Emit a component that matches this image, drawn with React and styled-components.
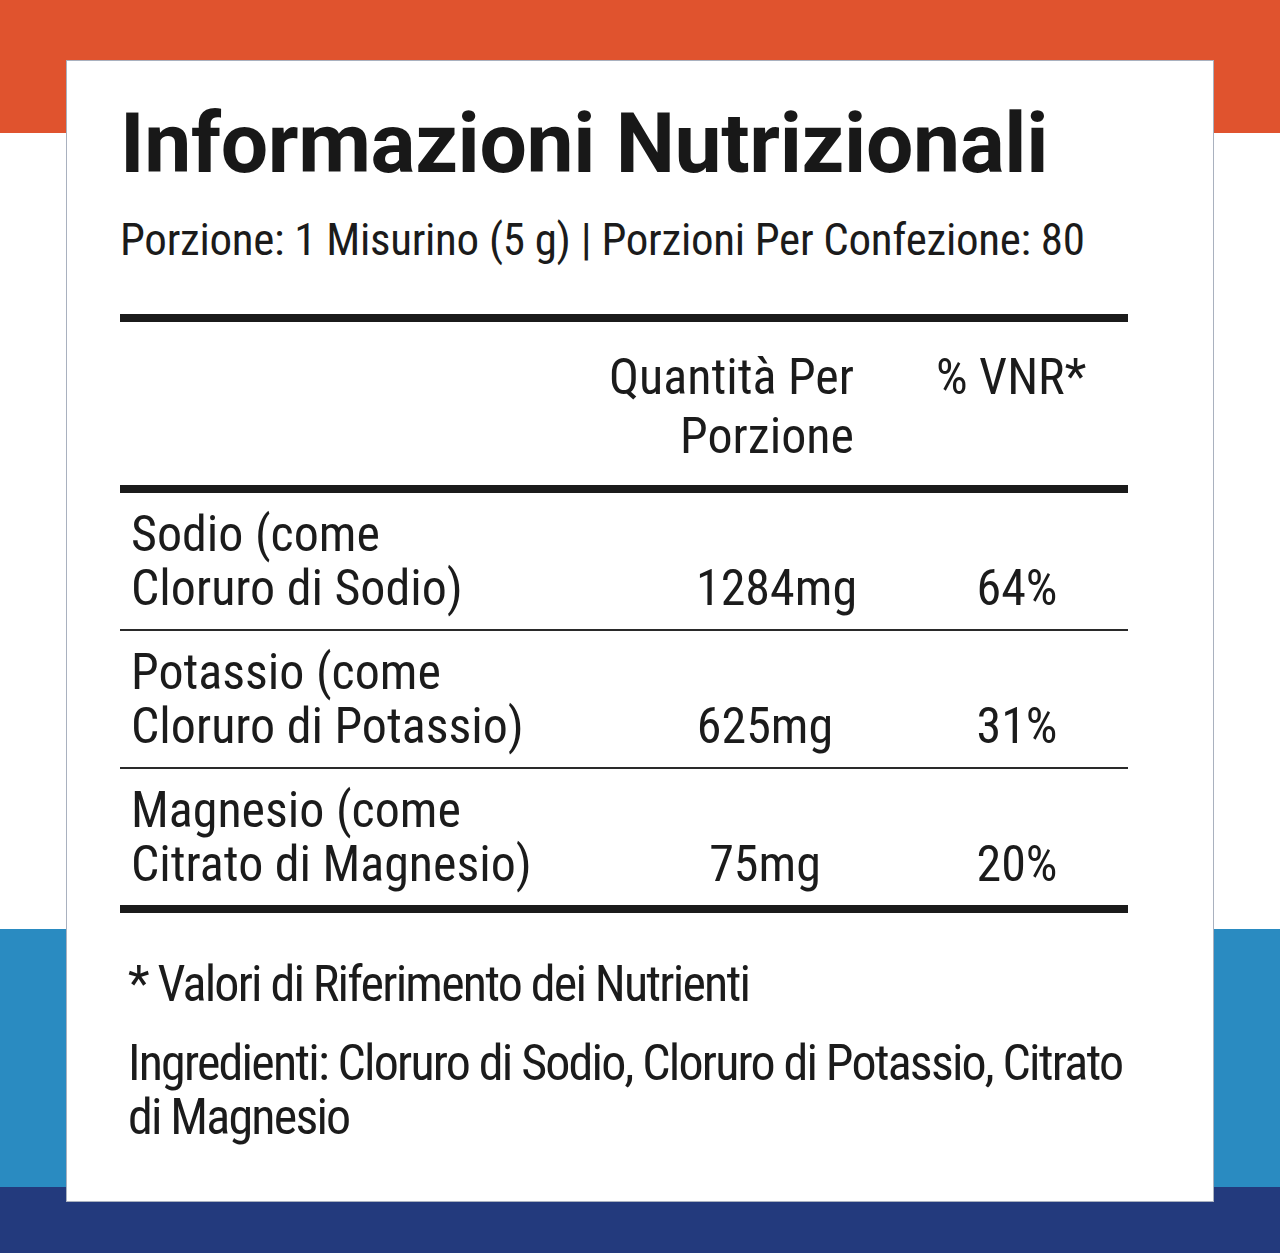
import React from 'react';
import styled, { createGlobalStyle } from 'styled-components';

const GlobalStyle = createGlobalStyle`
  html, body {
    margin: 0;
    padding: 0;
  }
  body {
    font-family: "Roboto Condensed", "DejaVu Sans Condensed", Roboto, sans-serif;
    color: #1b1b1b;
  }
`;

const rows = [
  { name: ['Sodio (come', 'Cloruro di Sodio)'], qty: '1284mg', pct: '64%', shift: 20 },
  { name: ['Potassio (come', 'Cloruro di Potassio)'], qty: '625mg', pct: '31%', shift: 0 },
  { name: ['Magnesio (come', 'Citrato di Magnesio)'], qty: '75mg', pct: '20%', shift: 0 },
];

const App = () => {
  return (
    <Page>
      <GlobalStyle />
      <Card>
        <Title>Informazioni Nutrizionali</Title>
        <Serving>Porzione: 1 Misurino (5 g) | Porzioni Per Confezione: 80</Serving>

        <Table>
          <HeadRow>
            <Cell />
            <QtyHead>
              Quantità Per
              <br />
              Porzione
            </QtyHead>
            <PctHead>% VNR*</PctHead>
          </HeadRow>
          {rows.map((r, i) => (
            <Row key={r.qty} last={i === rows.length - 1}>
              <Name>
                {r.name[0]}
                <br />
                {r.name[1]}
              </Name>
              <Qty shift={r.shift}>{r.qty}</Qty>
              <Pct>{r.pct}</Pct>
            </Row>
          ))}
        </Table>

        <Footer>
          <Note>* Valori di Riferimento dei Nutrienti</Note>
          <Note>
            Ingredienti: Cloruro di Sodio, Cloruro di Potassio, Citrato di Magnesio
          </Note>
        </Footer>
      </Card>
    </Page>
  );
};

const Page = styled.div`
  width: 1280px;
  height: 1253px;
  padding: 60px 66px 0;
  box-sizing: border-box;
  background: linear-gradient(
    to bottom,
    #e0532e 0,
    #e0532e 133px,
    #ffffff 133px,
    #ffffff 929px,
    #2a8bc1 929px,
    #2a8bc1 1187px,
    #233a7d 1187px,
    #233a7d 100%
  );
`;

const Card = styled.div`
  width: 1148px;
  height: 1142px;
  box-sizing: border-box;
  background: #ffffff;
  border: 1px solid #a9b1bf;
  padding: 41px 85px 0 53px;
`;

const Title = styled.h1`
  margin: 0;
  font-family: Roboto, "Liberation Sans", sans-serif;
  font-weight: 700;
  font-size: 84px;
  line-height: 84px;
  letter-spacing: -0.35px;
  color: #181818;
`;

const Serving = styled.div`
  margin-top: 27px;
  font-size: 45px;
  line-height: 54px;
  letter-spacing: -0.3px;
  white-space: nowrap;
`;

const Table = styled.div`
  margin-top: 47px;
  border-top: 8px solid #1b1b1b;
  border-bottom: 8px solid #1b1b1b;
`;

const HeadRow = styled.div`
  display: grid;
  grid-template-columns: 1fr 250px 274px;
  padding: 26px 0 19px;
  border-bottom: 8px solid #1b1b1b;
  font-size: 50px;
  line-height: 59px;
`;

const Cell = styled.div``;

const QtyHead = styled.div`
  text-align: right;
  white-space: nowrap;
`;

const PctHead = styled.div`
  padding-left: 82px;
  white-space: nowrap;
`;

const Row = styled.div`
  display: grid;
  grid-template-columns: 1fr 250px 274px;
  align-items: end;
  padding: 14px 0;
  font-size: 50px;
  line-height: 54px;
  border-bottom: ${(p) => (p.last ? 'none' : '2px solid #2a2a2a')};
`;

const Name = styled.div`
  padding-left: 11px;
  white-space: nowrap;
`;

const Qty = styled.div`
  padding-left: ${(p) => 72 + p.shift}px;
  text-align: center;
  white-space: nowrap;
`;

const Pct = styled.div`
  padding-left: 52px;
  text-align: center;
`;

const Footer = styled.div`
  margin-top: 44px;
  padding-left: 8px;
  display: flex;
  flex-direction: column;
  gap: 25px;
`;

const Note = styled.p`
  margin: 0;
  font-size: 50px;
  line-height: 54px;
  letter-spacing: -1.8px;
`;

export default App;
